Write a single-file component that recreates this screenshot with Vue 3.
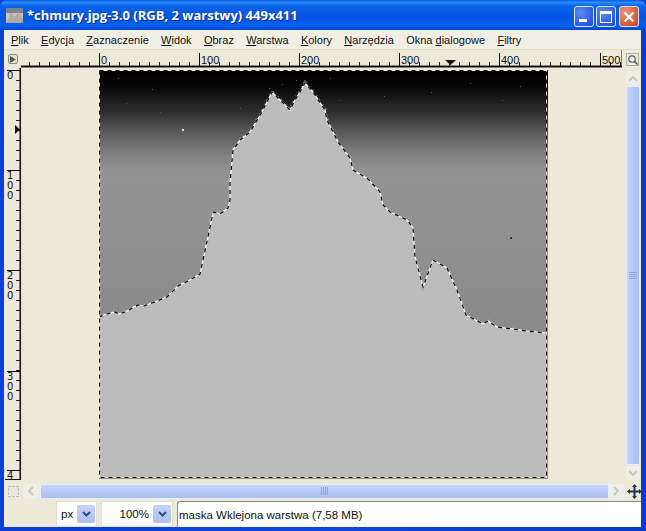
<script setup>
const menus = [
  { key: 'P', rest: 'lik' },
  { key: 'E', rest: 'dycja' },
  { key: 'Z', rest: 'aznaczenie' },
  { key: 'W', rest: 'idok' },
  { key: 'O', rest: 'braz' },
  { key: 'W', rest: 'arstwa' },
  { key: 'K', rest: 'olory' },
  { key: 'N', rest: 'arzędzia' },
  { pre: 'Okna ', key: 'd', rest: 'ialogowe' },
  { key: 'F', rest: 'iltry' }
]

// ruler ticks, one every 10 image pixels
const hTicks = []
for (let x = 29; x < 622; x += 10.01) {
  hTicks.push(Math.round(x) + 0.5)
}
const hLabels = [0, 100, 200, 300, 400, 500].map((v, i) => ({ v, x: Math.round(99 + i * 100.1) }))

const vTicks = []
for (let y = 70; y < 480; y += 10) {
  vTicks.push(y + 0.5)
}
const vLabels = [
  { x: 70, digits: ['0'] },
  { x: 170, digits: ['1', '0', '0'] },
  { x: 270, digits: ['2', '0', '0'] },
  { x: 371, digits: ['3', '0', '0'] },
  { x: 470, digits: ['4'] }
]

const outline = [
  [99, 317], [107, 314], [115, 312], [119, 314], [125, 312], [138, 305], [144, 306], [152, 303], [167, 297],
  [178, 286], [190, 280], [200, 274], [203, 260], [208, 237], [212, 217], [214, 212], [220, 214], [228, 208],
  [230, 200], [230, 183], [233, 150], [240, 140], [250, 132], [256, 122], [262, 112], [272, 92], [280, 100],
  [290, 110], [295, 100], [300, 92], [305, 83], [313, 92], [325, 110], [327, 120], [338, 142], [350, 158],
  [353, 170], [368, 179], [380, 192], [383, 205], [390, 212], [407, 220], [413, 228], [415, 257], [423, 287],
  [433, 260], [447, 268], [457, 290], [466, 315], [483, 324], [488, 321], [497, 327], [527, 331], [547, 333]
].map(p => p.join(',')).join(' ')

const mountain = `${outline} 547,478 99,478`

const specks = [
  [126, 103], [152, 89], [205, 120], [384, 96], [431, 92], [470, 83], [282, 84],
  [296, 80], [269, 88], [340, 100], [240, 108], [160, 112], [520, 86], [502, 100], [118, 78], [330, 78]
]
</script>

<template>
  <div class="window">
    <div class="titlebar">
      <svg class="app-icon" width="17" height="15" viewBox="0 0 17 15">
        <rect width="17" height="15" fill="#c9c5bb" />
        <rect width="17" height="5" fill="#7d8290" />
        <path d="M0 15 L5 5 L9 9 L12 4 L17 11 V15 Z" fill="#b2aca0" />
      </svg>
      <span class="title">*chmury.jpg-3.0 (RGB, 2 warstwy) 449x411</span>
      <div class="controls">
        <div class="ctl">
          <span class="min-bar"></span>
        </div>
        <div class="ctl">
          <span class="max-box"></span>
        </div>
        <div class="ctl close">
          <svg width="12" height="12" viewBox="0 0 12 12">
            <path d="M1.5 1.5 L10.5 10.5 M10.5 1.5 L1.5 10.5" stroke="#fff" stroke-width="2.2" />
          </svg>
        </div>
      </div>
    </div>

    <div class="client">
      <div class="menubar">
        <span v-for="(m, i) in menus" :key="i">{{ m.pre }}<u>{{ m.key }}</u>{{ m.rest }}</span>
      </div>

      <div class="ruler-row">
        <div class="corner">
          <div class="qmask">
            <svg width="6" height="7" viewBox="0 0 6 7"><path d="M0 0 L6 3.5 L0 7 Z" fill="#555" /></svg>
          </div>
        </div>
        <svg class="hruler" width="601" height="18" viewBox="21 50 601 18">
          <line v-for="x in hTicks" :key="x" :x1="x" :x2="x" y1="62" y2="66" stroke="#222" />
          <g v-for="l in hLabels" :key="l.v">
            <line :x1="l.x + 0.5" :x2="l.x + 0.5" y1="53" y2="66" stroke="#111" />
            <text :x="l.x + 2" y="64" class="rtext">{{ l.v }}</text>
          </g>
          <line x1="622" x2="622" y1="50" y2="67" stroke="#111" />
          <rect x="21" y="65.5" width="601" height="2" fill="#111" />
          <path d="M445 60 H456 L450.5 65 Z" fill="#111" />
        </svg>
        <div class="zoom-slot">
          <svg width="13" height="13" viewBox="0 0 13 13">
            <rect x="0.5" y="0.5" width="12" height="12" fill="none" stroke="#777" stroke-dasharray="1 1" />
            <circle cx="6" cy="6" r="3.2" fill="#e8eef2" stroke="#5d6570" stroke-width="1.3" />
            <path d="M8.5 8.5 L11.5 11.5" stroke="#4a5260" stroke-width="1.6" />
          </svg>
        </div>
      </div>

      <div class="workspace">
        <svg class="vruler" width="17" height="412" viewBox="4 68 17 412">
          <line v-for="y in vTicks" :key="y" x1="16" x2="20" :y1="y" :y2="y" stroke="#222" />
          <g v-for="l in vLabels" :key="l.x">
            <line x1="7" x2="20" :y1="l.x + 0.5" :y2="l.x + 0.5" stroke="#111" />
            <text v-for="(d, i) in l.digits" :key="i" x="7" :y="l.x + 9 + i * 10" class="vtext">{{ d }}</text>
          </g>
          <rect x="19.5" y="68" width="2" height="412" fill="#111" />
          <rect x="5" y="479" width="16" height="1" fill="#111" />
          <path d="M15 125 L20 129.5 L15 134 Z" fill="#111" />
        </svg>

        <div class="canvas">
          <svg class="image" width="449" height="409" viewBox="99 70 449 409">
            <defs>
              <linearGradient id="sky" x1="0" y1="70" x2="0" y2="478" gradientUnits="userSpaceOnUse">
                <stop offset="0" stop-color="#000" />
                <stop offset="0.04" stop-color="#060606" />
                <stop offset="0.1" stop-color="#2b2b2b" />
                <stop offset="0.15" stop-color="#585858" />
                <stop offset="0.2" stop-color="#7c7c7c" />
                <stop offset="0.245" stop-color="#939393" />
                <stop offset="0.35" stop-color="#929292" />
                <stop offset="0.6" stop-color="#8b8b8b" />
                <stop offset="1" stop-color="#8b8b8b" />
              </linearGradient>
            </defs>
            <rect x="99" y="70" width="449" height="409" fill="url(#sky)" />
            <rect v-for="(s, i) in specks" :key="i" :x="s[0]" :y="s[1]" width="1" height="1" fill="#555" />
            <rect x="182" y="129" width="2" height="2" fill="#ddd" />
            <rect x="510" y="237" width="2" height="2" fill="#333" />
            <polygon :points="mountain" fill="#bcbcbc" />
            <!-- rough grey fringe along the ridge -->
            <polyline :points="outline" fill="none" stroke="#aaa" stroke-width="4" stroke-dasharray="1 3 2 5" opacity="0.55" />
            <polyline :points="outline" fill="none" stroke="#fff" stroke-width="1.2" />
            <polyline :points="outline" fill="none" stroke="#000" stroke-width="1.2" stroke-dasharray="4 4" />
            <rect x="99.5" y="70.5" width="447" height="407" fill="none" stroke="#f8f4c8" />
            <rect x="99.5" y="70.5" width="447" height="407" fill="none" stroke="#000" stroke-dasharray="4 4" />
          </svg>
        </div>

        <div class="vscroll">
          <div class="sbtn">
            <svg width="10" height="7" viewBox="0 0 10 7"><path d="M1 6 L5 2 L9 6" fill="none" stroke="#c4c8c0" stroke-width="2" /></svg>
          </div>
          <div class="vthumb">
            <span></span><span></span><span></span><span></span>
          </div>
          <div class="sbtn">
            <svg width="10" height="7" viewBox="0 0 10 7"><path d="M1 1 L5 5 L9 1" fill="none" stroke="#c4c8c0" stroke-width="2" /></svg>
          </div>
        </div>
      </div>

      <div class="hscroll-row">
        <div class="qmask-slot">
          <svg width="11" height="11" viewBox="0 0 11 11">
            <rect x="0.5" y="0.5" width="10" height="10" fill="none" stroke="#aaa" stroke-dasharray="2 2" />
          </svg>
        </div>
        <div class="sbtn hbtn">
          <svg width="7" height="10" viewBox="0 0 7 10"><path d="M6 1 L2 5 L6 9" fill="none" stroke="#c4c8c0" stroke-width="2" /></svg>
        </div>
        <div class="hthumb">
          <span></span><span></span><span></span><span></span>
        </div>
        <div class="sbtn hbtn">
          <svg width="7" height="10" viewBox="0 0 7 10"><path d="M1 1 L5 5 L1 9" fill="none" stroke="#c4c8c0" stroke-width="2" /></svg>
        </div>
        <svg class="nav" width="15" height="15" viewBox="0 0 15 15">
          <path d="M7.5 0 L10 3 H8.5 V6.5 H12 V5 L15 7.5 L12 10 V8.5 H8.5 V12 H10 L7.5 15 L5 12 H6.5 V8.5 H3 V10 L0 7.5 L3 5 V6.5 H6.5 V3 H5 Z" fill="#1f3050" />
        </svg>
      </div>

      <div class="statusbar">
        <div class="combo unit">
          <span class="combo-text">px</span>
          <div class="drop"><svg width="9" height="6" viewBox="0 0 9 6"><path d="M1 1 L4.5 4.5 L8 1" fill="none" stroke="#2e4a88" stroke-width="2" /></svg></div>
        </div>
        <div class="combo zoom">
          <span class="combo-text right">100%</span>
          <div class="drop"><svg width="9" height="6" viewBox="0 0 9 6"><path d="M1 1 L4.5 4.5 L8 1" fill="none" stroke="#2e4a88" stroke-width="2" /></svg></div>
        </div>
        <div class="status-label">maska Wklejona warstwa (7,58 MB)</div>
      </div>
    </div>
  </div>
</template>

<style scoped>
.window {
  width: 646px;
  height: 531px;
  display: flex;
  flex-direction: column;
  overflow: hidden;
  background: linear-gradient(90deg, #0a3fd8 0, #0a46e0 50%, #0a3bc8 100%);
  font-family: "Liberation Sans", "Noto Sans", sans-serif;
  color: #111;
}

.titlebar {
  height: 30px;
  flex: none;
  display: flex;
  align-items: center;
  padding: 0 7px 0 6px;
  background: linear-gradient(180deg, #0a58e8 0, #2a8cfa 8%, #0a62ea 20%, #0555e2 60%, #0660ee 85%, #0246cc 100%);
  border-radius: 7px 7px 0 0;
}

.app-icon {
  flex: none;
}

.title {
  margin-left: 4px;
  font-family: "Open Sans", sans-serif;
  font-size: 13px;
  font-weight: 700;
  color: #fff;
  white-space: nowrap;
  text-shadow: 1px 1px 0 #0a2f98;
}

.controls {
  margin-left: auto;
  display: flex;
  gap: 2px;
  margin-top: 3px;
}

.ctl {
  width: 20px;
  height: 21px;
  box-sizing: border-box;
  border: 1px solid #dfe8fb;
  border-radius: 3px;
  background: radial-gradient(circle at 30% 30%, #5b8cf2, #2a5be0 70%, #1d48c8);
  display: flex;
  align-items: center;
  justify-content: center;
  position: relative;
}

.ctl.close {
  margin-left: 1px;
  background: radial-gradient(circle at 30% 30%, #ee9a7c, #d9552e 70%, #bf3a18);
}

.min-bar {
  position: absolute;
  left: 4px;
  bottom: 4px;
  width: 8px;
  height: 3px;
  background: #fff;
}

.max-box {
  width: 12px;
  height: 12px;
  box-sizing: border-box;
  border: 1px solid #fff;
  border-top-width: 3px;
}

.client {
  flex: 1;
  min-height: 0;
  margin: 0 5px 4px 4px;
  background: #ece9d8;
  display: flex;
  flex-direction: column;
}

.menubar {
  height: 20px;
  flex: none;
  box-sizing: border-box;
  display: flex;
  align-items: center;
  gap: 12.3px;
  padding-left: 7px;
  font-size: 11px;
  background: #f1efe4;
  border-bottom: 1px solid #dfdccb;
}

.ruler-row {
  height: 18px;
  flex: none;
  display: flex;
}

.corner {
  width: 17px;
  flex: none;
  display: flex;
  justify-content: center;
  padding-top: 4px;
  box-sizing: border-box;
}

.qmask {
  width: 10px;
  height: 10px;
  box-sizing: border-box;
  border: 1px solid #8d8d84;
  border-radius: 2px;
  background: #e4e2d6;
  display: flex;
  align-items: center;
  justify-content: center;
}

.hruler,
.vruler {
  flex: none;
  display: block;
  background: #ece9d8;
}

.rtext {
  font-family: "Liberation Sans", sans-serif;
  font-size: 11px;
  fill: #111;
}

.vtext {
  font-family: "DejaVu Sans", sans-serif;
  font-size: 10px;
  fill: #111;
}

.zoom-slot {
  flex: 1;
  display: flex;
  padding: 3px 0 0 4px;
  box-sizing: border-box;
}

.workspace {
  height: 412px;
  flex: none;
  display: flex;
}

.canvas {
  width: 601px;
  flex: none;
  box-sizing: border-box;
  padding: 2px 0 0 78px;
}

.image {
  display: block;
}

.vscroll {
  flex: 1;
  box-sizing: border-box;
  padding: 3px 1px 0 4px;
  display: flex;
  flex-direction: column;
  gap: 1px;
}

.sbtn {
  flex: none;
  height: 14px;
  background: #eeeee4;
  border-radius: 2px;
  display: flex;
  align-items: center;
  justify-content: center;
}

.vthumb {
  height: 379px;
  flex: none;
  box-sizing: border-box;
  border: 1px solid #e6edfb;
  border-radius: 2px;
  background: linear-gradient(90deg, #c6d6fb, #b4c9f8 50%, #a9bff2);
  display: flex;
  flex-direction: column;
  align-items: center;
  justify-content: center;
  gap: 1px;
}

.vthumb span {
  width: 8px;
  height: 1px;
  background: #8ea6d8;
}

.hscroll-row {
  height: 16px;
  margin-top: 3px;
  flex: none;
  display: flex;
  align-items: center;
}

.qmask-slot {
  width: 19px;
  flex: none;
  display: flex;
  justify-content: center;
}

.hbtn {
  width: 15px;
  height: 15px;
}

.hthumb {
  width: 569px;
  height: 15px;
  margin-left: 2px;
  flex: none;
  box-sizing: border-box;
  border: 1px solid #e6edfb;
  border-radius: 2px;
  background: linear-gradient(180deg, #c6d6fb, #b4c9f8 50%, #a9bff2);
  display: flex;
  align-items: center;
  justify-content: center;
  gap: 1px;
}

.hthumb span {
  width: 1px;
  height: 8px;
  background: #8ea6d8;
}

.nav {
  margin-left: 3px;
  flex: none;
}

.statusbar {
  flex: 1;
  min-height: 0;
  display: flex;
  align-items: stretch;
  padding: 2px 0 0 52px;
  font-size: 11.5px;
}

.combo {
  flex: none;
  box-sizing: border-box;
  display: flex;
  align-items: center;
  background: #fff;
  border: 1px solid #e2dfd0;
  padding-right: 1px;
}

.unit {
  width: 41px;
}

.zoom {
  width: 72px;
  margin-left: 4px;
}

.combo-text {
  flex: 1;
  padding-left: 4px;
}

.combo-text.right {
  text-align: right;
  padding-right: 4px;
}

.drop {
  width: 18px;
  height: 18px;
  flex: none;
  background: linear-gradient(180deg, #c4d4f8, #aebff0);
  border-radius: 2px;
  display: flex;
  align-items: center;
  justify-content: center;
}

.status-label {
  flex: 1;
  margin-left: 4px;
  padding-left: 1px;
  display: flex;
  align-items: center;
  background: #fff;
  border-top: 1px solid #8d8a78;
  border-left: 1px solid #8d8a78;
  border-radius: 3px 0 0 0;
  box-sizing: border-box;
}
</style>

<style>
body {
  margin: 0;
}
</style>
